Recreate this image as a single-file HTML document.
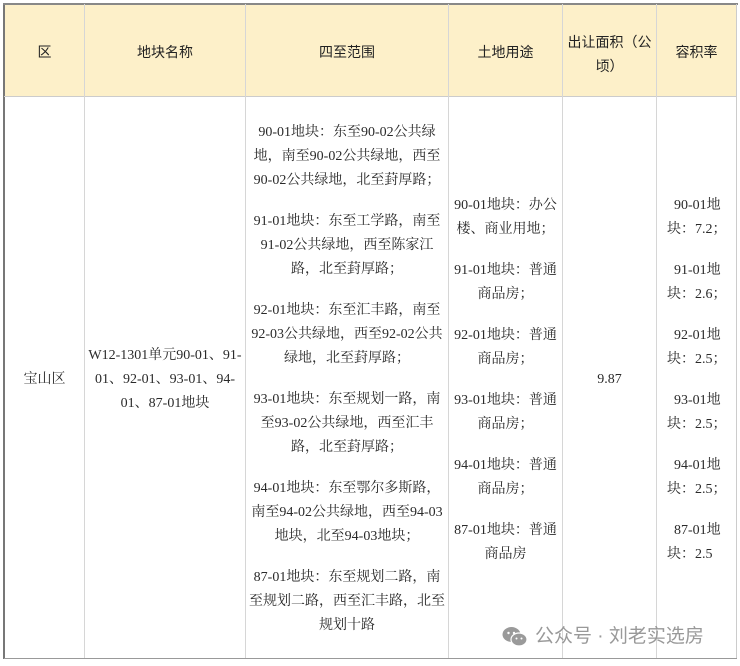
<!DOCTYPE html>
<html><head><meta charset="utf-8"><style>
body{margin:0;width:740px;height:666px;background:#fff;position:relative;overflow:hidden;font-family:"Liberation Serif","Noto Serif CJK SC",serif;font-size:14px;color:#2a2a2a}
.hd{position:absolute;top:4px;left:4px;width:733px;height:92px;background:#fdf0c9}
.v{position:absolute;top:4px;height:654px;width:1px;background:#d6d6d6}
.h{position:absolute;left:4px;width:733px;height:1px;background:#ccc}
.t{position:absolute;height:24px;line-height:24px;text-align:center;white-space:nowrap;transform:translateY(-12px)}
.b{font-family:"Liberation Sans","Noto Sans CJK SC",sans-serif;font-size:14px;color:#222}
</style></head><body>
<div class="hd"></div>
<div style="position:absolute;left:3px;top:3px;width:2px;height:656px;background:#777"></div>
<div style="position:absolute;left:3px;top:3px;width:735px;height:2px;background:#888"></div>
<div class="h" style="top:96px"></div>
<div class="h" style="top:658px;background:#999"></div>
<div class="v" style="left:84px"></div>
<div class="v" style="left:245px"></div>
<div class="v" style="left:448px"></div>
<div class="v" style="left:562px"></div>
<div class="v" style="left:656px"></div>
<div class="v" style="left:736px;background:#ccc"></div>

<div class="t b" style="left:5px;width:79px;top:52px">区</div>
<div class="t b" style="left:85px;width:160px;top:52px">地块名称</div>
<div class="t b" style="left:246px;width:202px;top:52px">四至范围</div>
<div class="t b" style="left:449px;width:113px;top:52px">土地用途</div>
<div class="t b" style="left:563px;width:93px;top:42px">出让面积（公</div>
<div class="t b" style="left:563px;width:93px;top:66px">顷）</div>
<div class="t b" style="left:657px;width:79px;top:52px">容积率</div>

<div class="t" style="left:5px;width:79px;top:380px">宝山区</div>
<div class="t" style="left:85px;width:160px;top:356px">W12-1301单元90-01、91-</div>
<div class="t" style="left:85px;width:160px;top:380px">01、92-01、93-01、94-</div>
<div class="t" style="left:85px;width:160px;top:404px">01、87-01地块</div>

<div class="t" style="left:246px;width:202px;top:133px">90-01地块：东至90-02公共绿</div>
<div class="t" style="left:246px;width:202px;top:157px">地，南至90-02公共绿地，西至</div>
<div class="t" style="left:246px;width:202px;top:181px">90-02公共绿地，北至葑厚路；</div>
<div class="t" style="left:246px;width:202px;top:222px">91-01地块：东至工学路，南至</div>
<div class="t" style="left:246px;width:202px;top:246px">91-02公共绿地，西至陈家江</div>
<div class="t" style="left:246px;width:202px;top:270px">路，北至葑厚路；</div>
<div class="t" style="left:246px;width:202px;top:311px">92-01地块：东至汇丰路，南至</div>
<div class="t" style="left:246px;width:202px;top:335px">92-03公共绿地，西至92-02公共</div>
<div class="t" style="left:246px;width:202px;top:359px">绿地，北至葑厚路；</div>
<div class="t" style="left:246px;width:202px;top:400px">93-01地块：东至规划一路，南</div>
<div class="t" style="left:246px;width:202px;top:424px">至93-02公共绿地，西至汇丰</div>
<div class="t" style="left:246px;width:202px;top:448px">路，北至葑厚路；</div>
<div class="t" style="left:246px;width:202px;top:489px">94-01地块：东至鄂尔多斯路，</div>
<div class="t" style="left:246px;width:202px;top:513px">南至94-02公共绿地，西至94-03</div>
<div class="t" style="left:246px;width:202px;top:537px">地块，北至94-03地块；</div>
<div class="t" style="left:246px;width:202px;top:578px">87-01地块：东至规划二路，南</div>
<div class="t" style="left:246px;width:202px;top:602px">至规划二路，西至汇丰路，北至</div>
<div class="t" style="left:246px;width:202px;top:626px">规划十路</div>

<div class="t" style="left:449px;width:113px;top:206px">90-01地块：办公</div>
<div class="t" style="left:449px;width:113px;top:230px">楼、商业用地；</div>
<div class="t" style="left:449px;width:113px;top:271px">91-01地块：普通</div>
<div class="t" style="left:449px;width:113px;top:295px">商品房；</div>
<div class="t" style="left:449px;width:113px;top:336px">92-01地块：普通</div>
<div class="t" style="left:449px;width:113px;top:360px">商品房；</div>
<div class="t" style="left:449px;width:113px;top:401px">93-01地块：普通</div>
<div class="t" style="left:449px;width:113px;top:425px">商品房；</div>
<div class="t" style="left:449px;width:113px;top:466px">94-01地块：普通</div>
<div class="t" style="left:449px;width:113px;top:490px">商品房；</div>
<div class="t" style="left:449px;width:113px;top:531px">87-01地块：普通</div>
<div class="t" style="left:449px;width:113px;top:555px">商品房</div>

<div class="t" style="left:563px;width:93px;top:380px">9.87</div>

<div class="t" style="left:674px;top:206px">90-01地</div>
<div class="t" style="left:667px;top:230px">块：7.2；</div>
<div class="t" style="left:674px;top:271px">91-01地</div>
<div class="t" style="left:667px;top:295px">块：2.6；</div>
<div class="t" style="left:674px;top:336px">92-01地</div>
<div class="t" style="left:667px;top:360px">块：2.5；</div>
<div class="t" style="left:674px;top:401px">93-01地</div>
<div class="t" style="left:667px;top:425px">块：2.5；</div>
<div class="t" style="left:674px;top:466px">94-01地</div>
<div class="t" style="left:667px;top:490px">块：2.5；</div>
<div class="t" style="left:674px;top:531px">87-01地</div>
<div class="t" style="left:667px;top:555px">块：2.5</div>

<svg style="position:absolute;left:502px;top:626px" width="26" height="22" viewBox="0 0 26 22">
<ellipse cx="9.5" cy="8.5" rx="9" ry="7.5" fill="#9a9a9a"/>
<ellipse cx="17" cy="13.5" rx="8" ry="6.5" fill="#9a9a9a" stroke="#fff" stroke-width="1.2"/>
<circle cx="6.5" cy="7" r="1.2" fill="#fff"/><circle cx="12" cy="7" r="1.2" fill="#fff"/>
<circle cx="14.5" cy="12.5" r="1" fill="#fff"/><circle cx="19.5" cy="12.5" r="1" fill="#fff"/>
</svg>
<div style="position:absolute;left:535px;top:623px;font-family:'Liberation Sans','Noto Sans CJK SC',sans-serif;font-size:19px;color:#999;line-height:28px;white-space:nowrap">公众号 · 刘老实选房</div>
</body></html>
